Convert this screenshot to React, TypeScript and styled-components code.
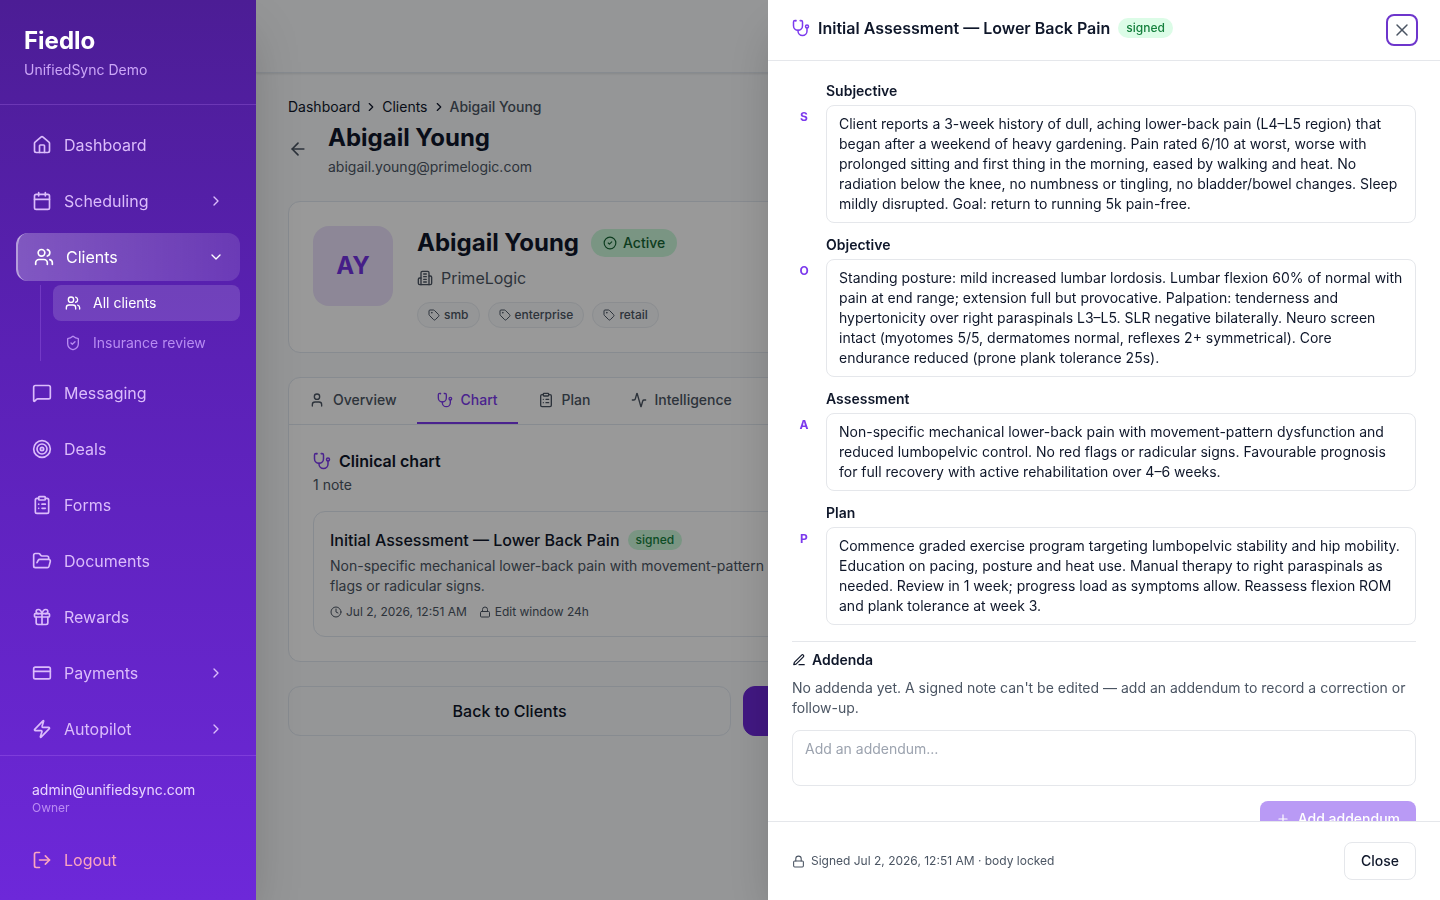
import React from 'react';
import styled, { createGlobalStyle, css } from 'styled-components';
import {
  House, Calendar, Users, ShieldCheck, MessageSquare, Target, ClipboardList, FolderOpen, Gift,
  CreditCard, Zap, LogOut, ChevronRight, ChevronDown, ArrowLeft, CircleCheck, Tag, User,
  Activity, Clock, Lock, Plus, X,
} from 'lucide-react';

const Global = createGlobalStyle`
  *, *::before, *::after { box-sizing: border-box; }
  html, body, #root { height: 100%; }
  body { margin: 0; overflow: hidden; background: #f8fafc; color: #0f172a;
    font-family: Inter, "Liberation Sans", sans-serif; font-size: 14px; line-height: 20px; }
  h1, h2, h3, p, ul, ol { margin: 0; padding: 0; }
  ul, ol { list-style: none; }
  a { color: inherit; text-decoration: none; }
  button { font: inherit; color: inherit; background: none; border: 0; padding: 0; }
  svg { flex-shrink: 0; display: block; }
`;

const Shell = styled.div`
  display: flex;
  height: 100vh;
`;

/* ---------- sidebar ---------- */
const Sidebar = styled.aside`
  position: relative;
  z-index: 3;
  width: 256px;
  flex-shrink: 0;
  display: flex;
  flex-direction: column;
  background: linear-gradient(180deg, #4c1d95 0%, #5b21b6 40%, #6d28d9 100%);
  box-shadow: 0 25px 50px -12px rgba(0, 0, 0, 0.25);
  color: #dbbcfb;
`;
const Brand = styled.div`
  padding: 24px;
  border-bottom: 1px solid rgba(192, 132, 252, 0.25);
`;
const BrandName = styled.div`
  font-size: 24px;
  line-height: 34px;
  font-weight: 700;
  color: #fff;
`;
const BrandSub = styled.div`
  margin-top: 2px;
  color: #cba6f7;
`;
const Nav = styled.nav`
  flex: 1;
  min-height: 0;
  overflow: hidden;
  padding: 16px;
`;
const NavList = styled.ul`
  display: flex;
  flex-direction: column;
  gap: 8px;
`;
const navRow = css`
  display: flex;
  align-items: center;
  width: 100%;
  height: 48px;
  gap: 12px;
  padding: 0 16px;
  border-radius: 12px;
  font-size: 16px;
  line-height: 24px;
  text-align: left;
`;
const NavLink = styled.a`${navRow}`;
const NavButton = styled.button<{ $active?: boolean }>`
  ${navRow}
  ${p => p.$active && css`
    color: #fff;
    border-left: 2px solid rgba(255, 255, 255, 0.5);
    background: linear-gradient(90deg, rgba(255, 255, 255, 0.25), rgba(255, 255, 255, 0.12));
  `}
`;
const NavLabel = styled.span`flex: 1;`;
const SubList = styled.ul`
  display: flex;
  flex-direction: column;
  gap: 4px;
  margin: 4px 0 0 24px;
  padding-left: 12px;
  border-left: 1px solid rgba(192, 132, 252, 0.25);
`;
const SubLink = styled.a<{ $active?: boolean }>`
  display: flex;
  align-items: center;
  gap: 12px;
  height: 36px;
  padding: 0 12px;
  border-radius: 8px;
  color: ${p => (p.$active ? '#fff' : '#b88cf2')};
  background: ${p => (p.$active ? 'rgba(255,255,255,0.15)' : 'transparent')};
`;
const Account = styled.div`
  padding: 16px;
  border-top: 1px solid rgba(192, 132, 252, 0.25);
`;
const AccountInfo = styled.div`
  padding: 8px 16px;
  margin-bottom: 12px;
  color: #e9d5ff;
`;
const AccountRole = styled.div`
  font-size: 12px;
  line-height: 16px;
  color: #bb8cf3;
`;
const Logout = styled.button`
  ${navRow}
  color: #fba6c0;
`;

/* ---------- page ---------- */
const Page = styled.div`
  flex: 1;
  min-width: 0;
  background: #f8fafc;
`;
const TopBar = styled.header`
  height: 73px;
  border-bottom: 1px solid #e2e8f0;
  box-shadow: 0 1px 2px rgba(0, 0, 0, 0.1);
`;
const Main = styled.main`
  padding: 24px 32px;
  display: flex;
  flex-direction: column;
  gap: 24px;
`;
const Crumbs = styled.ol`
  display: flex;
  align-items: center;
  gap: 4px;
  margin-bottom: 4px;
`;
const Crumb = styled.li<{ $current?: boolean }>`
  display: flex;
  align-items: center;
  gap: 4px;
  font-weight: ${p => (p.$current ? 500 : 400)};
  color: ${p => (p.$current ? '#4b5563' : '#0f172a')};
`;
const TitleRow = styled.div`
  display: flex;
  align-items: center;
  gap: 20px;
`;
const BackButton = styled.button`
  color: #4b5563;
`;
const Title = styled.h1`
  font-size: 24px;
  line-height: 34px;
  font-weight: 700;
`;
const Muted = styled.p<{ $top?: number }>`
  margin-top: ${p => p.$top ?? 0}px;
  color: #4b5563;
`;
const Card = styled.section`
  background: #fff;
  border: 1px solid #e2e8f0;
  border-radius: 12px;
`;
const Profile = styled(Card)`
  display: flex;
  gap: 24px;
  padding: 24px;
`;
const Avatar = styled.div`
  width: 80px;
  height: 80px;
  border-radius: 16px;
  display: grid;
  place-items: center;
  background: #ebe2fc;
  color: #7433e3;
  font-size: 24px;
  font-weight: 700;
`;
const NameRow = styled.div`
  display: flex;
  align-items: center;
  gap: 12px;
`;
const Status = styled.span`
  display: flex;
  align-items: center;
  gap: 6px;
  height: 28px;
  padding: 0 12px;
  border-radius: 14px;
  background: #cbf9db;
  color: #166534;
  font-weight: 500;
`;
const Company = styled.div`
  display: flex;
  align-items: center;
  gap: 8px;
  margin-top: 6px;
  font-size: 16px;
  line-height: 24px;
  color: #4b5563;
`;
const Tags = styled.ul`
  display: flex;
  gap: 8px;
  margin-top: 12px;
`;
const TagChip = styled.li`
  display: flex;
  align-items: center;
  gap: 4px;
  height: 26px;
  padding: 0 10px;
  border: 1px solid #e8ecf1;
  border-radius: 13px;
  background: #f8fafc;
  color: #4b5563;
  font-size: 12px;
  font-weight: 500;
`;
const Tabs = styled.div`
  display: flex;
  border-bottom: 1px solid #e2e8f0;
`;
const Tab = styled.button<{ $active?: boolean }>`
  display: flex;
  align-items: center;
  gap: 8px;
  padding: 12px 20px;
  border-bottom: 2px solid ${p => (p.$active ? '#7c3aed' : 'transparent')};
  color: ${p => (p.$active ? '#7c3aed' : '#4b5563')};
  font-weight: 500;
`;
const TabPanel = styled.div`padding: 24px;`;
const PanelHeading = styled.h2`
  display: flex;
  align-items: center;
  gap: 8px;
  font-size: 16px;
  line-height: 24px;
  font-weight: 600;
`;
const Note = styled.article`
  margin-top: 16px;
  padding: 16px;
  border: 1px solid #e2e8f0;
  border-radius: 12px;
`;
const NoteTitle = styled.h3`
  display: flex;
  align-items: center;
  gap: 8px;
  font-size: 16px;
  line-height: 24px;
  font-weight: 500;
`;
const NoteText = styled(Muted)`max-width: 800px;`;
const Signed = styled.span`
  padding: 2px 8px;
  border-radius: 10px;
  background: #dcfce7;
  color: #15803d;
  font-size: 12px;
  line-height: 16px;
  font-weight: 500;
`;
const SignedDim = styled(Signed)`background: #cbf9db;`;
const Meta = styled.div`
  display: flex;
  gap: 12px;
  margin-top: 8px;
  font-size: 12px;
  line-height: 16px;
  color: #4b5563;
`;
const IconText = styled.span<{ $gap?: number }>`
  display: flex;
  align-items: center;
  gap: ${p => p.$gap ?? 4}px;
`;
const Actions = styled.div`
  display: grid;
  grid-template-columns: 2fr 3fr;
  gap: 12px;
`;
const ActionButton = styled.button<{ $primary?: boolean }>`
  height: 50px;
  border-radius: 12px;
  border: 1px solid ${p => (p.$primary ? '#6d28d9' : '#e2e8f0')};
  background: ${p => (p.$primary ? '#6d28d9' : 'transparent')};
  color: ${p => (p.$primary ? '#fff' : '#0f172a')};
  font-size: 16px;
  font-weight: 500;
`;

/* ---------- drawer ---------- */
const Backdrop = styled.div`
  position: fixed;
  inset: 0;
  z-index: 2;
  background: rgba(0, 0, 0, 0.4);
`;
const Drawer = styled.section`
  position: fixed;
  z-index: 4;
  top: 0;
  right: 0;
  bottom: 0;
  width: 100%;
  max-width: 672px;
  display: flex;
  flex-direction: column;
  background: #fff;
  box-shadow: 0 25px 50px -12px rgba(0, 0, 0, 0.25);
`;
const DrawerHead = styled.header`
  display: flex;
  align-items: center;
  justify-content: space-between;
  padding: 14px 22px 14px 24px;
  border-bottom: 1px solid #e5e7eb;
`;
const DrawerTitle = styled.h2`
  display: flex;
  align-items: center;
  gap: 8px;
  height: 24px;
  margin-bottom: 4px;
  font-size: 16px;
  line-height: 24px;
  font-weight: 600;
`;
const CloseIcon = styled.button`
  display: grid;
  place-items: center;
  width: 32px;
  height: 32px;
  border: 2px solid #6d35cc;
  border-radius: 8px;
  color: #4b5563;
`;
const DrawerBody = styled.div`
  flex: 1;
  min-height: 0;
  overflow: hidden;
  padding: 20px 24px;
`;
const Sections = styled.div`
  display: flex;
  flex-direction: column;
  gap: 12px;
`;
const SoapRow = styled.div`
  display: flex;
  gap: 10px;
`;
const Letter = styled.span`
  width: 24px;
  padding-top: 24px;
  flex-shrink: 0;
  text-align: center;
  font-size: 12px;
  line-height: 24px;
  font-weight: 700;
  color: #7c3aed;
`;
const SoapField = styled.div`flex: 1; min-width: 0;`;
const SoapLabel = styled.h3`
  margin-bottom: 4px;
  font-size: 14px;
  line-height: 20px;
  font-weight: 600;
`;
const SoapText = styled.p`
  padding: 8px 12px;
  border: 1px solid #e5e7eb;
  border-radius: 8px;
`;
const Addenda = styled.div`
  margin-top: 16px;
  padding-top: 8px;
  border-top: 1px solid #e5e7eb;
`;
const AddendaTitle = styled.h3`
  display: flex;
  align-items: center;
  gap: 6px;
  margin-bottom: 8px;
  font-size: 14px;
  line-height: 20px;
  font-weight: 600;
`;
const AddendumInput = styled.textarea`
  display: block;
  width: 100%;
  height: 56px;
  margin: 12px 0 15px;
  padding: 8px 12px;
  resize: none;
  border: 1px solid #e5e7eb;
  border-radius: 8px;
  font: inherit;
  &::placeholder { color: #9ca3af; opacity: 1; }
`;
const AddButton = styled.button`
  display: flex;
  align-items: center;
  gap: 8px;
  height: 36px;
  margin-left: auto;
  padding: 0 16px;
  border-radius: 8px;
  background: #b99af5;
  color: #fff;
  font-weight: 500;
`;
const DrawerFoot = styled.footer`
  display: flex;
  align-items: center;
  justify-content: space-between;
  padding: 20px 24px;
  border-top: 1px solid #e5e7eb;
  font-size: 12px;
  color: #4b5563;
`;
const CloseButton = styled.button`
  height: 38px;
  padding: 0 16px;
  border: 1px solid #e5e7eb;
  border-radius: 8px;
  font-size: 14px;
  font-weight: 500;
  color: #0f172a;
`;

/* ---------- custom line icons ---------- */
type IconProps = { size?: number; color?: string; children?: React.ReactNode };
const LineIcon = ({ size = 16, color = 'currentColor', children }: IconProps) => (
  <svg width={size} height={size} viewBox="0 0 24 24" fill="none" stroke={color} strokeWidth="2" strokeLinecap="round" strokeLinejoin="round" aria-hidden="true">
    {children}
  </svg>
);
const Building = (p: IconProps) => (
  <LineIcon {...p}>
    <path d="M6 22V4a2 2 0 0 1 2-2h8a2 2 0 0 1 2 2v18Z" />
    <path d="M6 12H4a2 2 0 0 0-2 2v6a2 2 0 0 0 2 2h2" />
    <path d="M18 9h2a2 2 0 0 1 2 2v9a2 2 0 0 1-2 2h-2" />
    <path d="M10 6h4" /><path d="M10 10h4" /><path d="M10 14h4" /><path d="M10 18h4" />
  </LineIcon>
);
const Stethoscope = (p: IconProps) => (
  <LineIcon {...p}>
    <path d="M4.8 2.3A.3.3 0 1 0 5 2H4a2 2 0 0 0-2 2v5a6 6 0 0 0 6 6 6 6 0 0 0 6-6V4a2 2 0 0 0-2-2h-1a.2.2 0 1 0 .3.3" />
    <path d="M8 15v1a6 6 0 0 0 6 6 6 6 0 0 0 6-6v-4" />
    <circle cx="20" cy="10" r="2" />
  </LineIcon>
);
const Pen = (p: IconProps) => (
  <LineIcon {...p}>
    <path d="M12 20h9" />
    <path d="M16.5 3.5a2.12 2.12 0 0 1 3 3L7 19l-4 1 1-4Z" />
  </LineIcon>
);

const primary = [
  { icon: MessageSquare, label: 'Messaging' },
  { icon: Target, label: 'Deals' },
  { icon: ClipboardList, label: 'Forms' },
  { icon: FolderOpen, label: 'Documents' },
  { icon: Gift, label: 'Rewards' },
];

const soap = [
  { letter: 'S', label: 'Subjective', text: 'Client reports a 3-week history of dull, aching lower-back pain (L4–L5 region) that began after a weekend of heavy gardening. Pain rated 6/10 at worst, worse with prolonged sitting and first thing in the morning, eased by walking and heat. No radiation below the knee, no numbness or tingling, no bladder/bowel changes. Sleep mildly disrupted. Goal: return to running 5k pain-free.' },
  { letter: 'O', label: 'Objective', text: 'Standing posture: mild increased lumbar lordosis. Lumbar flexion 60% of normal with pain at end range; extension full but provocative. Palpation: tenderness and hypertonicity over right paraspinals L3–L5. SLR negative bilaterally. Neuro screen intact (myotomes 5/5, dermatomes normal, reflexes 2+ symmetrical). Core endurance reduced (prone plank tolerance 25s).' },
  { letter: 'A', label: 'Assessment', text: 'Non-specific mechanical lower-back pain with movement-pattern dysfunction and reduced lumbopelvic control. No red flags or radicular signs. Favourable prognosis for full recovery with active rehabilitation over 4–6 weeks.' },
  { letter: 'P', label: 'Plan', text: 'Commence graded exercise program targeting lumbopelvic stability and hip mobility. Education on pacing, posture and heat use. Manual therapy to right paraspinals as needed. Review in 1 week; progress load as symptoms allow. Reassess flexion ROM and plank tolerance at week 3.' },
];

const Expandable = ({ icon: Icon, label }: { icon: React.ElementType; label: string }) => (
  <li>
    <NavButton type="button" aria-expanded={false}>
      <Icon size={20} />
      <NavLabel>{label}</NavLabel>
      <ChevronRight size={16} />
    </NavButton>
  </li>
);

export default function App() {
  return (
    <>
      <Global />
      <Shell>
        <Sidebar>
          <Brand>
            <BrandName>Fiedlo</BrandName>
            <BrandSub>UnifiedSync Demo</BrandSub>
          </Brand>
          <Nav aria-label="Primary">
            <NavList>
              <li><NavLink href="#dashboard"><House size={20} />Dashboard</NavLink></li>
              <Expandable icon={Calendar} label="Scheduling" />
              <li>
                <NavButton type="button" $active aria-expanded>
                  <Users size={20} />
                  <NavLabel>Clients</NavLabel>
                  <ChevronDown size={16} />
                </NavButton>
                <SubList>
                  <li><SubLink href="#clients" $active><Users size={16} />All clients</SubLink></li>
                  <li><SubLink href="#insurance"><ShieldCheck size={16} />Insurance review</SubLink></li>
                </SubList>
              </li>
              {primary.map(({ icon: Icon, label }) => (
                <li key={label}><NavLink href={`#${label.toLowerCase()}`}><Icon size={20} />{label}</NavLink></li>
              ))}
              <Expandable icon={CreditCard} label="Payments" />
              <Expandable icon={Zap} label="Autopilot" />
            </NavList>
          </Nav>
          <Account>
            <AccountInfo>
              <div>admin@unifiedsync.com</div>
              <AccountRole>Owner</AccountRole>
            </AccountInfo>
            <Logout type="button"><LogOut size={20} />Logout</Logout>
          </Account>
        </Sidebar>

        <Page>
          <TopBar />
          <Main>
            <div>
              <Crumbs>
                <Crumb><a href="#dashboard">Dashboard</a><ChevronRight size={14} /></Crumb>
                <Crumb><a href="#clients">Clients</a><ChevronRight size={14} /></Crumb>
                <Crumb $current>Abigail Young</Crumb>
              </Crumbs>
              <TitleRow>
                <BackButton type="button" aria-label="Back"><ArrowLeft size={20} /></BackButton>
                <div>
                  <Title>Abigail Young</Title>
                  <Muted $top={2}>abigail.young@primelogic.com</Muted>
                </div>
              </TitleRow>
            </div>

            <Profile>
              <Avatar>AY</Avatar>
              <div>
                <NameRow>
                  <Title as="h2">Abigail Young</Title>
                  <Status><CircleCheck size={14} />Active</Status>
                </NameRow>
                <Company><Building />PrimeLogic</Company>
                <Tags>
                  {['smb', 'enterprise', 'retail'].map(t => (
                    <TagChip key={t}><Tag size={12} />{t}</TagChip>
                  ))}
                </Tags>
              </div>
            </Profile>

            <Card>
              <Tabs role="tablist">
                <Tab type="button" role="tab"><User size={16} />Overview</Tab>
                <Tab type="button" role="tab" aria-selected $active><Stethoscope size={16} />Chart</Tab>
                <Tab type="button" role="tab"><ClipboardList size={16} />Plan</Tab>
                <Tab type="button" role="tab"><Activity size={16} />Intelligence</Tab>
              </Tabs>
              <TabPanel role="tabpanel">
                <PanelHeading><Stethoscope size={18} color="#7c3aed" />Clinical chart</PanelHeading>
                <Muted $top={2}>1 note</Muted>
                <Note>
                  <NoteTitle>Initial Assessment — Lower Back Pain<SignedDim>signed</SignedDim></NoteTitle>
                  <NoteText $top={4}>
                    Non-specific mechanical lower-back pain with movement-pattern dysfunction and reduced lumbopelvic control. No red flags or radicular signs.
                  </NoteText>
                  <Meta>
                    <IconText><Clock size={12} />Jul 2, 2026, 12:51 AM</IconText>
                    <IconText><Lock size={12} />Edit window 24h</IconText>
                  </Meta>
                </Note>
              </TabPanel>
            </Card>

            <Actions>
              <ActionButton type="button">Back to Clients</ActionButton>
              <ActionButton type="button" $primary>Edit Client</ActionButton>
            </Actions>
          </Main>
        </Page>
      </Shell>

      <Backdrop />
      <Drawer role="dialog" aria-labelledby="note-title">
        <DrawerHead>
          <DrawerTitle id="note-title">
            <Stethoscope size={18} color="#7c3aed" />
            Initial Assessment — Lower Back Pain
            <Signed>signed</Signed>
          </DrawerTitle>
          <CloseIcon type="button" aria-label="Close panel"><X size={20} strokeWidth={1.75} /></CloseIcon>
        </DrawerHead>
        <DrawerBody>
          <Sections>
            {soap.map(s => (
              <SoapRow key={s.letter}>
                <Letter>{s.letter}</Letter>
                <SoapField>
                  <SoapLabel>{s.label}</SoapLabel>
                  <SoapText>{s.text}</SoapText>
                </SoapField>
              </SoapRow>
            ))}
          </Sections>
          <Addenda>
            <AddendaTitle><Pen size={14} />Addenda</AddendaTitle>
            <Muted>No addenda yet. A signed note can't be edited — add an addendum to record a correction or follow-up.</Muted>
            <AddendumInput aria-label="Addendum" placeholder="Add an addendum…" />
            <AddButton type="button" disabled><Plus size={14} />Add addendum</AddButton>
          </Addenda>
        </DrawerBody>
        <DrawerFoot>
          <IconText $gap={6}><Lock size={13} />Signed Jul 2, 2026, 12:51 AM · body locked</IconText>
          <CloseButton type="button">Close</CloseButton>
        </DrawerFoot>
      </Drawer>
    </>
  );
}
